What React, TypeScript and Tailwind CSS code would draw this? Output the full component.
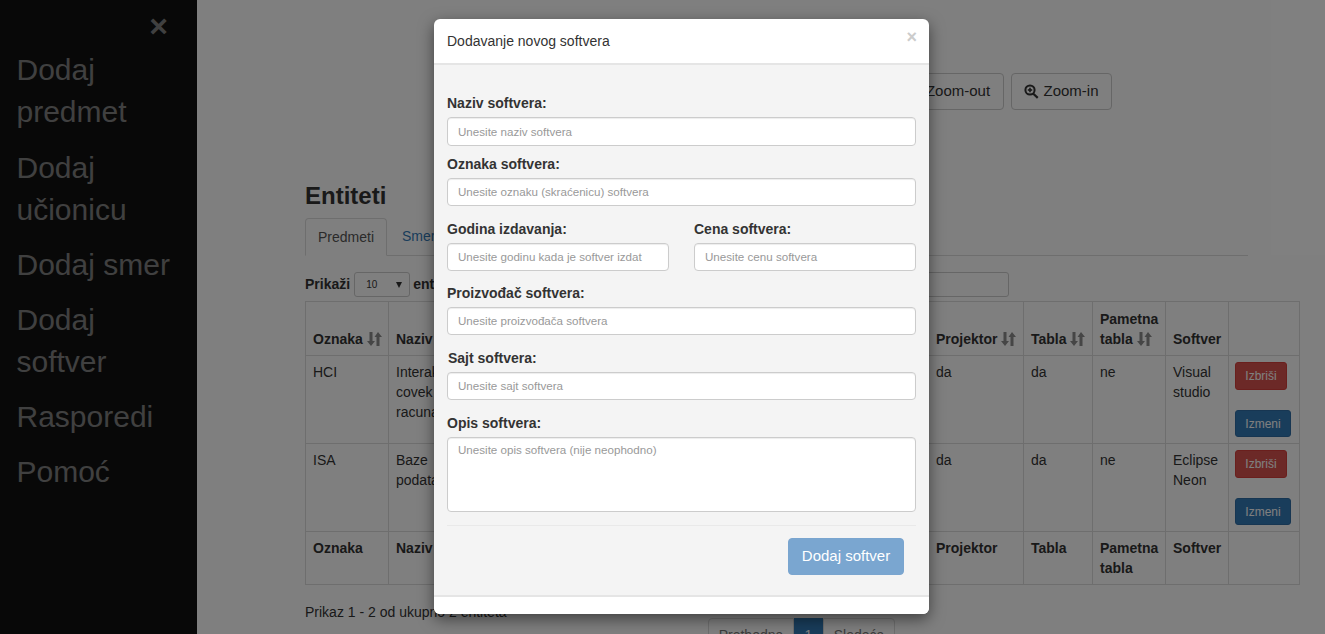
const fieldClass = 'block w-full rounded-[4px] border border-[#ccc] bg-white px-[10px] text-[11.6px] text-[#555] outline-none placeholder:text-[#999] shadow-[inset_0_1px_1px_rgba(0,0,0,0.075)]';
const labelClass = 'block h-5 mb-1 text-[14px] leading-5 font-bold text-[#333]';
const cellClass = 'border border-[#ddd] px-[7px] py-[6px] align-top leading-5';
const headClass = 'border border-[#ddd] px-[7px] pt-[7px] pb-[6px] align-bottom leading-5 font-bold text-left whitespace-nowrap';
const smallField = fieldClass + ' h-[28px] pb-[2px]';
const zoomButton = 'flex h-[37px] items-center justify-center gap-1 rounded-[4px] border border-[#ccc]';

const menu = [['Dodaj', 'predmet'], ['Dodaj', 'učionicu'], ['Dodaj smer'], ['Dodaj', 'softver'], ['Rasporedi'], ['Pomoć']];

function SortIcon() {
  return (
    <svg width="15" height="14" viewBox="0 0 15 14" className="inline-block -mt-0.5 align-middle" fill="#8c8c8c">
      <path d="M2.500 0h3v9h2.500L4 14 0 9h2.500z" />
      <path d="M9.500 14h3V5H15L11 0 7.500 5h2z" />
    </svg>
  );
}

function ZoomIcon() {
  return (
    <svg width="15" height="15" viewBox="0 0 15 15" className="shrink-0">
      <circle cx="6" cy="6" r="4.600" fill="none" stroke="#333" strokeWidth="2" />
      <path d="M3.800 5.200h4.400v1.600H3.800z" fill="#333" />
      <path d="M5.200 3.800h1.600v4.400H5.200z" fill="#333" />
      <path d="M9.500 8.500l5 4.500-1.500 1.800-5-4.800z" fill="#333" />
    </svg>
  );
}

function RowActions() {
  return (
    <div className="flex flex-col items-start gap-[20px]">
      <button className="h-[28px] w-[52px] rounded-[3px] border border-[#d43f3a] bg-[#d9534f] text-[12px] text-white">Izbriši</button>
      <button className="h-[27px] w-[56px] rounded-[3px] border border-[#2e6da4] bg-[#337ab7] text-[12px] text-white">Izmeni</button>
    </div>
  );
}

function Page() {
  return (
    <div className="flex h-[634px] overflow-hidden bg-white text-[14px] text-[#333]">
      <nav className="relative w-[197px] shrink-0 bg-[#111] pt-[42.8px]">
        <span className="absolute right-[29px] top-[6px] text-[32px] leading-10 font-bold text-[#818181]">×</span>
        {menu.map((lines) => (
          <a key={lines.join(' ')} className="block px-[16.5px] py-[6.6px] text-[30px] leading-[42px] text-[#818181]">
            {lines.map((l) => <span key={l} className="block">{l}</span>)}
          </a>
        ))}
      </nav>
      <main className="w-[1128px] shrink-0 pl-[108px] pt-[73px]">
        <div className="flex w-[807px] justify-end gap-[7px] text-[15px]">
          <button className={zoomButton + ' w-[111px]'}><ZoomIcon /> Zoom-out</button>
          <button className={zoomButton + ' w-[101px]'}><ZoomIcon /> Zoom-in</button>
        </div>
        <h3 className="mt-[72px] text-[24px] leading-[28px] font-bold">Entiteti</h3>
        <div className="mt-[8px] flex h-[38px] w-[943px] border-b border-[#ddd] text-[14px]">
          <span className="h-[38px] rounded-t-[4px] border border-[#ddd] border-b-white bg-white px-3 leading-[36px] text-[#555]">Predmeti</span>
          <span className="ml-[3px] px-3 leading-[36px] text-[#337ab7]">Smerovi</span>
        </div>
        <div className="mt-[16px] flex w-[704px] items-center justify-between">
          <div className="flex items-center font-bold">
            Prikaži
            <span className="ml-[4px] mr-[3px] flex h-[25px] w-[56px] items-center justify-between rounded-[3px] border border-[#ccc] pl-[11px] pr-[7px] text-[10px] font-normal">
              10
              <svg width="6" height="6" viewBox="0 0 6 6" fill="#333"><path d="M0 0h6L3 6z" /></svg>
            </span>
            entiteta
          </div>
          <input className="h-[25px] w-[200px] rounded-[3px] border border-[#ccc]" />
        </div>
        <table className="mt-[4px] w-[994px] table-fixed border-collapse">
          <colgroup>
            <col className="w-[83px]" />
            <col className="w-[90px]" />
            <col className="w-[450px]" />
            <col className="w-[95px]" />
            <col className="w-[69px]" />
            <col className="w-[73px]" />
            <col className="w-[63px]" />
            <col className="w-[71px]" />
          </colgroup>
          <thead>
            <tr className="h-[54px]">
              <th className={headClass}>Oznaka <SortIcon /></th>
              <th className={headClass}>Naziv</th>
              <th className={headClass}></th>
              <th className={headClass}>Projektor <SortIcon /></th>
              <th className={headClass}>Tabla <SortIcon /></th>
              <th className={headClass}>Pametna<br />tabla <SortIcon /></th>
              <th className={headClass}>Softver</th>
              <th className={headClass}></th>
            </tr>
          </thead>
          <tbody>
            <tr className="h-[88px]">
              <td className={cellClass}>HCI</td>
              <td className={cellClass}>Interakcija covek racunar</td>
              <td className={cellClass}></td>
              <td className={cellClass}>da</td>
              <td className={cellClass}>da</td>
              <td className={cellClass}>ne</td>
              <td className={cellClass}>Visual studio</td>
              <td className={cellClass + ' !px-[6px]'}><RowActions /></td>
            </tr>
            <tr className="h-[88px]">
              <td className={cellClass}>ISA</td>
              <td className={cellClass}>Baze podataka</td>
              <td className={cellClass}></td>
              <td className={cellClass}>da</td>
              <td className={cellClass}>da</td>
              <td className={cellClass}>ne</td>
              <td className={cellClass}>Eclipse Neon</td>
              <td className={cellClass + ' !px-[6px]'}><RowActions /></td>
            </tr>
            <tr className="h-[53px] font-bold">
              <td className={cellClass}>Oznaka</td>
              <td className={cellClass}>Naziv</td>
              <td className={cellClass}></td>
              <td className={cellClass}>Projektor</td>
              <td className={cellClass}>Tabla</td>
              <td className={cellClass}>Pametna tabla</td>
              <td className={cellClass}>Softver</td>
              <td className={cellClass}></td>
            </tr>
          </tbody>
        </table>
        <div className="flex items-start">
          <div className="mt-[17px] w-[403px] leading-5">Prikaz 1 - 2 od ukupno 2 entiteta</div>
          <div className="mt-[33px] flex h-[34px] text-center leading-[32px]">
            <span className="w-[86px] rounded-l-[4px] border border-[#ddd] text-[#777]">Prethodna</span>
            <span className="w-[29px] border border-[#337ab7] bg-[#337ab7] text-white">1</span>
            <span className="w-[72px] rounded-r-[4px] border border-[#ddd] text-[#777]">Sledeća</span>
          </div>
        </div>
      </main>
    </div>
  );
}

function SoftwareModal() {
  return (
    <div className="absolute left-[434px] top-[19px] w-[495px] overflow-hidden rounded-[6px] bg-white shadow-[0_5px_15px_rgba(0,0,0,0.5)]">
      <div className="relative h-[44px] pl-[13px] pt-[12px] text-[14px] leading-5 text-[#333]">
        Dodavanje novog softvera
        <span className="absolute right-[12px] top-[8px] text-[18px] leading-5 font-bold text-[#ccc]">×</span>
      </div>
      <div className="border-y-2 border-[#e5e5e5] bg-[#f4f4f4] px-[13px] pt-[28px]">
        <label className={labelClass}>Naziv softvera:</label>
        <input className={fieldClass + ' h-[29px]'} placeholder="Unesite naziv softvera" />
        <label className={labelClass + ' mt-2'}>Oznaka softvera:</label>
        <input className={smallField} placeholder="Unesite oznaku (skraćenicu) softvera" />
        <div className="mt-[13px] grid grid-cols-2 gap-x-[25px]">
          <div>
            <label className={labelClass}>Godina izdavanja:</label>
            <input className={smallField} placeholder="Unesite godinu kada je softver izdat" />
          </div>
          <div>
            <label className={labelClass}>Cena softvera:</label>
            <input className={smallField} placeholder="Unesite cenu softvera" />
          </div>
        </div>
        <label className={labelClass + ' mt-3'}>Proizvođač softvera:</label>
        <input className={smallField} placeholder="Unesite proizvođača softvera" />
        <label className={labelClass + ' mt-[13px] pl-[1px]'}>Sajt softvera:</label>
        <input className={smallField} placeholder="Unesite sajt softvera" />
        <label className={labelClass + ' mt-[13px]'}>Opis softvera:</label>
        <textarea className={fieldClass + ' h-[75px] resize-none py-[3px]'} placeholder="Unesite opis softvera (nije neophodno)" />
        <div className="mt-[13px] border-t border-[#e9e9e9] pb-[20px] pt-[12px]">
          <div className="flex justify-end pr-[12px]">
            <button className="h-[37px] w-[116px] rounded-[4px] border border-[#7aa5cf] bg-[#7aa6d0] text-[15px] text-white">Dodaj softver</button>
          </div>
        </div>
      </div>
      <div className="h-[17px] bg-white" />
    </div>
  );
}

export default function App() {
  return (
    <div className="relative h-[634px] w-[1325px] overflow-hidden [font-family:'Liberation_Sans',Arial,sans-serif]">
      <Page />
      <div className="absolute inset-0 bg-black/50" />
      <SoftwareModal />
    </div>
  );
}
